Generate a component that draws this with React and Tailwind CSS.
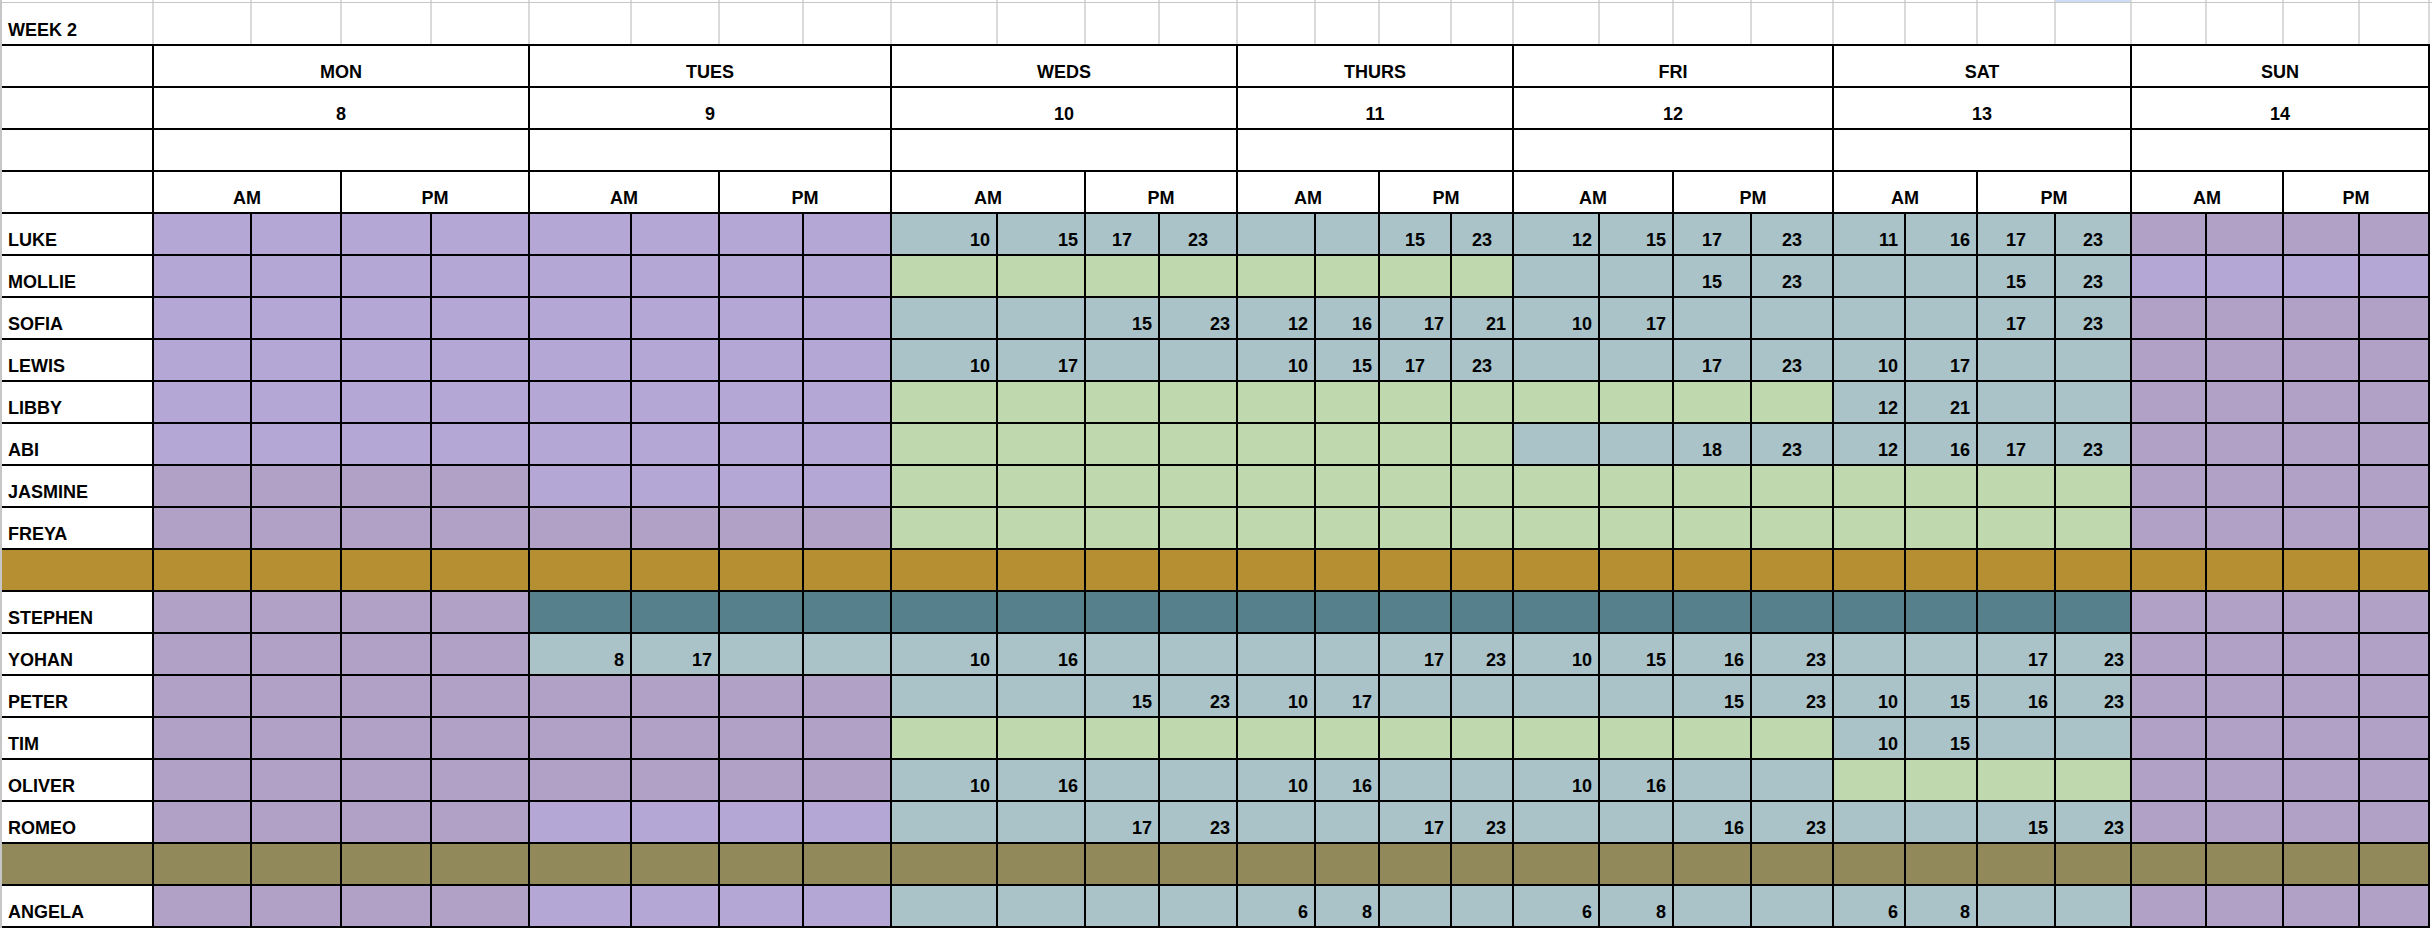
import React from "react";

const COLS =
  "grid-cols-[150px_96px_88px_88px_96px_100px_86px_82px_86px_104px_86px_72px_76px_76px_62px_70px_60px_84px_72px_76px_80px_70px_70px_76px_74px_73px_75px_74px_68px]";

const DAYS = [
  ["MON", "8"],
  ["TUES", "9"],
  ["WEDS", "10"],
  ["THURS", "11"],
  ["FRI", "12"],
  ["SAT", "13"],
  ["SUN", "14"],
];

const COLORS = {
  L: "bg-[#b4a7d6]",
  D: "bg-[#b1a1c6]",
  T: "bg-[#aac3c8]",
  G: "bg-[#bfd8ad]",
  S: "bg-[#55808c]",
};

const ROWS = [
  ["LUKE", "L L L L L L L L T10 T15 T17c T23c T T T15c T23c T12 T15 T17c T23c T11 T16 T17c T23c D D D D"],
  ["MOLLIE", "L L L L L L L L G G G G G G G G T T T15c T23c T T T15c T23c L L L L"],
  ["SOFIA", "L L L L L L L L T T T15 T23 T12 T16 T17 T21 T10 T17 T T T T T17c T23c D D D D"],
  ["LEWIS", "L L L L L L L L T10 T17 T T T10 T15 T17c T23c T T T17c T23c T10 T17 T T D D D D"],
  ["LIBBY", "L L L L L L L L G G G G G G G G G G G G T12 T21 T T D D D D"],
  ["ABI", "L L L L L L L L G G G G G G G G T T T18c T23c T12 T16 T17c T23c D D D D"],
  ["JASMINE", "D D D D L L L L G G G G G G G G G G G G G G G G D D D D"],
  ["FREYA", "D D D D D D D D G G G G G G G G G G G G G G G G D D D D"],
  ["#GOLD", ""],
  ["STEPHEN", "D D D D S S S S S S S S S S S S S S S S S S S S D D D D"],
  ["YOHAN", "D D D D T8 T17 T T T10 T16 T T T T T17 T23 T10 T15 T16 T23 T T T17 T23 D D D D"],
  ["PETER", "D D D D D D D D T T T15 T23 T10 T17 T T T T T15 T23 T10 T15 T16 T23 D D D D"],
  ["TIM", "D D D D D D D D G G G G G G G G G G G G T10 T15 T T D D D D"],
  ["OLIVER", "D D D D D D D D T10 T16 T T T10 T16 T T T10 T16 T T G G G G D D D D"],
  ["ROMEO", "D D D D L L L L T T T17 T23 T T T17 T23 T T T16 T23 T T T15 T23 D D D D"],
  ["#OLIVE", ""],
  ["ANGELA", "D D D D L L L L T T T T T6 T8 T T T6 T8 T T T6 T8 T T D D D D"],
];

function parse(tok) {
  const color = tok[0];
  let rest = tok.slice(1);
  let center = false;
  if (rest.endsWith("c")) {
    center = true;
    rest = rest.slice(0, -1);
  }
  return { color, value: rest, center };
}

const TXT = "text-[18px] leading-[20px] font-bold text-black";

function BodyRow({ name, spec }) {
  if (name === "#GOLD" || name === "#OLIVE") {
    const bg = name === "#GOLD" ? "bg-[#b78f33]" : "bg-[#91895a]";
    return (
      <>
        {Array.from({ length: 29 }).map((_, i) => (
          <div key={i} className={bg} />
        ))}
      </>
    );
  }
  const cells = spec.trim().split(/\s+/).map(parse);
  return (
    <>
      <div className={`bg-white flex items-end pl-[6px] pb-[4px] ${TXT}`}>{name}</div>
      {cells.map((c, i) => (
        <div
          key={i}
          className={`${COLORS[c.color]} flex items-end pb-[4px] ${TXT} ${
            c.center ? "justify-center" : "justify-end pr-[6px]"
          }`}
        >
          {c.value}
        </div>
      ))}
    </>
  );
}

export default function App() {
  return (
    <div className="w-[2432px] h-[928px] bg-white overflow-hidden border-l-2 border-[#c6c6c6] flex flex-col font-['Liberation_Sans',Arial,sans-serif]">
      {/* partial row above */}
      <div className={`grid ${COLS} gap-x-[2px] pr-[2px] h-[2px] bg-[#dadada] w-[2428px]`}>
        {Array.from({ length: 29 }).map((_, i) => (
          <div key={i} className={i === 24 ? "bg-[#cfdcf5]" : "bg-white"} />
        ))}
      </div>
      <div className="h-[1px] bg-[#c8c8c8] w-[2430px]" />
      {/* week row */}
      <div className={`grid ${COLS} gap-x-[2px] pr-[2px] h-[41px] bg-[#dadada] w-[2428px]`}>
        <div className={`bg-white flex items-end pl-[6px] pb-[4px] ${TXT}`}>WEEK 2</div>
        {Array.from({ length: 28 }).map((_, i) => (
          <div key={i} className="bg-white" />
        ))}
      </div>
      {/* main table */}
      <div
        className={`grid ${COLS} auto-rows-[40px] gap-[2px] p-[2px] pl-0 bg-black w-[2428px]`}
      >
        {/* day names */}
        <div className="bg-white" />
        {DAYS.map(([d]) => (
          <div key={d} className={`col-span-4 bg-white flex items-end justify-center pb-[4px] ${TXT}`}>
            {d}
          </div>
        ))}
        {/* dates */}
        <div className="bg-white" />
        {DAYS.map(([d, n]) => (
          <div key={d} className={`col-span-4 bg-white flex items-end justify-center pb-[4px] ${TXT}`}>
            {n}
          </div>
        ))}
        {/* blank */}
        <div className="bg-white" />
        {DAYS.map(([d]) => (
          <div key={d} className="col-span-4 bg-white" />
        ))}
        {/* AM / PM */}
        <div className="bg-white" />
        {DAYS.map(([d]) => (
          <React.Fragment key={d}>
            <div className={`col-span-2 bg-white flex items-end justify-center pb-[4px] ${TXT}`}>AM</div>
            <div className={`col-span-2 bg-white flex items-end justify-center pb-[4px] ${TXT}`}>PM</div>
          </React.Fragment>
        ))}
        {ROWS.map(([name, spec]) => (
          <BodyRow key={name} name={name} spec={spec} />
        ))}
      </div>
    </div>
  );
}
